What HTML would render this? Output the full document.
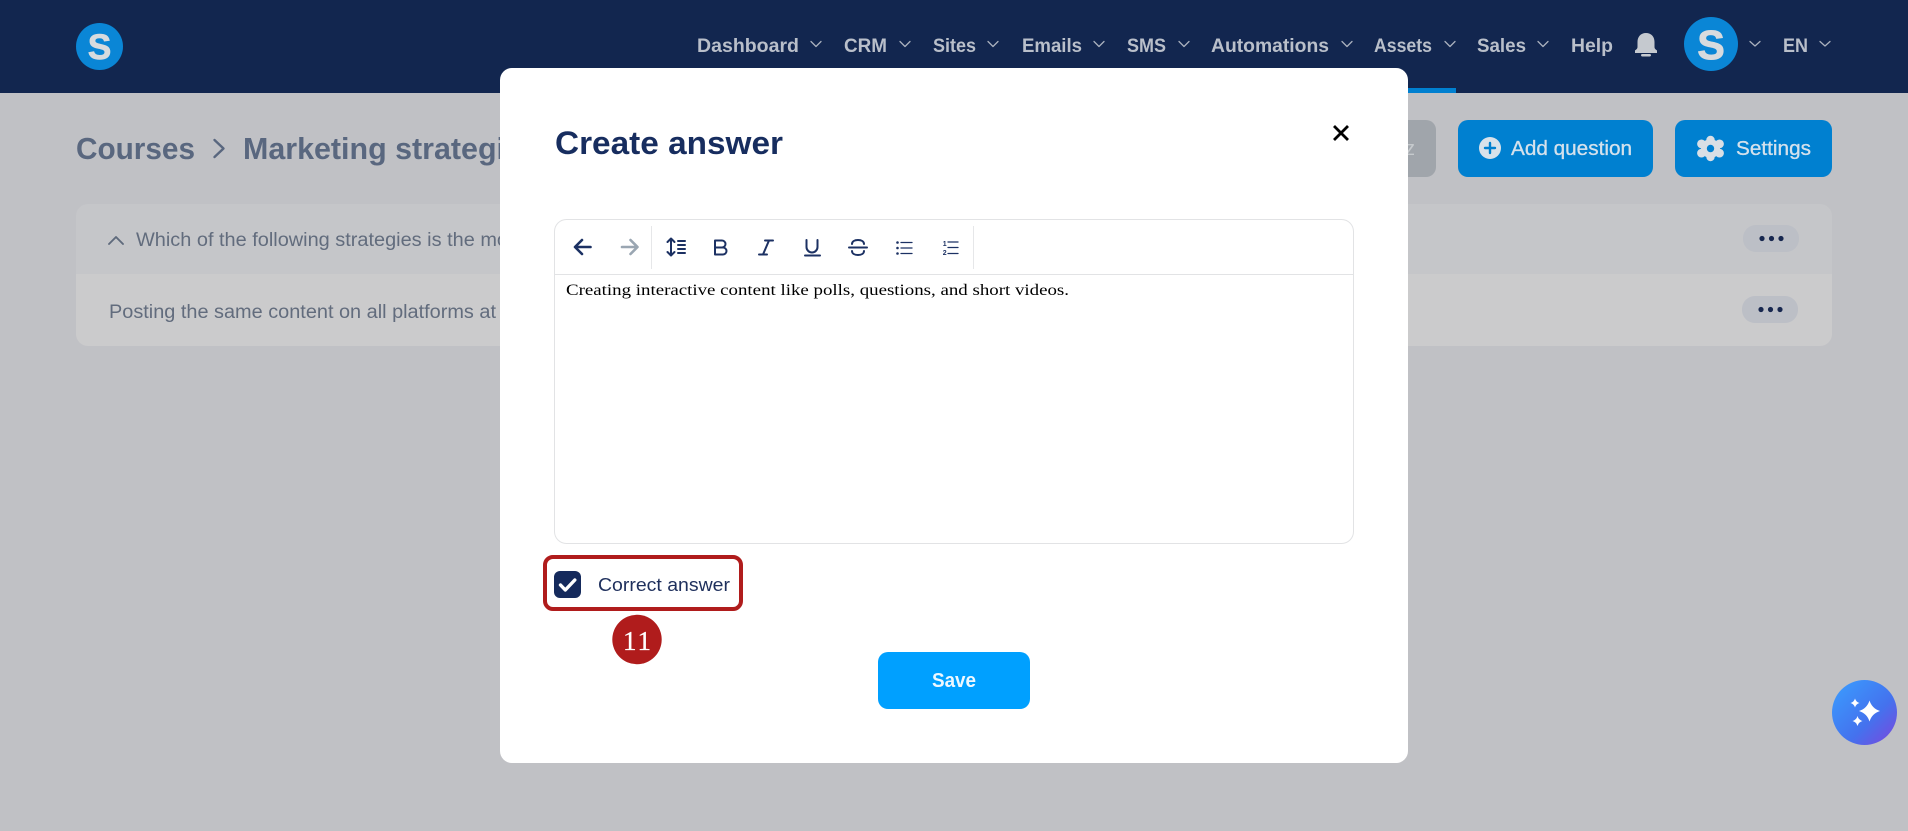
<!DOCTYPE html>
<html lang="en">
<head>
<meta charset="utf-8">
<title>Create answer</title>
<style>
html,body{margin:0;padding:0;background:#c0c1c5;width:1908px;height:831px;overflow:hidden}
svg{display:block}
text{font-family:"Liberation Sans",sans-serif}
.nav{font-weight:700;font-size:19px;fill:#b9bfca}
.chev{fill:none;stroke:#aab1be;stroke-width:1.3;stroke-linecap:round;stroke-linejoin:round}
.tb{fill:none;stroke:#1c3163;stroke-width:2;stroke-linecap:round;stroke-linejoin:round}
.thin{stroke-width:1.3}
.fat{stroke-width:2.6}
.row{font-size:19px;fill:#626c7d}
</style>
</head>
<body>
<svg width="1908" height="831" viewBox="0 0 1908 831" xmlns="http://www.w3.org/2000/svg">
<defs>
<linearGradient id="fab" x1="0" y1="0" x2="1" y2="1"><stop offset="0" stop-color="#3a9fff"/><stop offset=".6" stop-color="#4472ee"/><stop offset="1" stop-color="#7d45dc"/></linearGradient>
</defs>
<rect width="1908" height="831" fill="#c0c1c5"/>
<!-- header -->
<rect width="1908" height="93" fill="#12264f"/>
<rect x="1370" y="88" width="86" height="5" fill="#0080d0"/>
<circle cx="99.5" cy="46.5" r="23.5" fill="#0a86d6"/>
<text x="99.5" y="59" text-anchor="middle" font-size="35" font-weight="700" fill="#d8dbde" stroke="#d8dbde" stroke-width=".9">S</text>
<text class="nav" x="697" y="52" textLength="102" lengthAdjust="spacingAndGlyphs">Dashboard</text>
<path class="chev" d="M811 41.500l5 5 5-5"/>
<text class="nav" x="844" y="52" textLength="43" lengthAdjust="spacingAndGlyphs">CRM</text>
<path class="chev" d="M900 41.500l5 5 5-5"/>
<text class="nav" x="933" y="52" textLength="43" lengthAdjust="spacingAndGlyphs">Sites</text>
<path class="chev" d="M988 41.500l5 5 5-5"/>
<text class="nav" x="1022" y="52" textLength="60" lengthAdjust="spacingAndGlyphs">Emails</text>
<path class="chev" d="M1094 41.500l5 5 5-5"/>
<text class="nav" x="1127" y="52" textLength="39" lengthAdjust="spacingAndGlyphs">SMS</text>
<path class="chev" d="M1179 41.500l5 5 5-5"/>
<text class="nav" x="1211" y="52" textLength="118" lengthAdjust="spacingAndGlyphs">Automations</text>
<path class="chev" d="M1342 41.500l5 5 5-5"/>
<text class="nav" x="1374" y="52" textLength="58" lengthAdjust="spacingAndGlyphs">Assets</text>
<path class="chev" d="M1445 41.500l5 5 5-5"/>
<text class="nav" x="1477" y="52" textLength="49" lengthAdjust="spacingAndGlyphs">Sales</text>
<path class="chev" d="M1538 41.500l5 5 5-5"/>
<text class="nav" x="1571" y="52" textLength="42" lengthAdjust="spacingAndGlyphs">Help</text>
<path d="M1646 33c-5.500 0-8.500 4-8.500 9v5c0 2-1.500 2.500-2.500 3.500v2.500h22v-2.500c-1-1-2.500-1.500-2.500-3.500v-5c0-5-3-9-8.500-9z" fill="#c5c9cf"/>
<rect x="1641" y="54" width="10" height="2.500" rx="1.200" fill="#c5c9cf"/>
<circle cx="1711" cy="44" r="27" fill="#0a86d6"/>
<text x="1711" y="59" text-anchor="middle" font-size="41" font-weight="700" fill="#d8dbde" stroke="#d8dbde" stroke-width="1">S</text>
<path class="chev" d="M1750 41.500l5 4.500 5-4.500"/>
<text class="nav" x="1783" y="52" textLength="25" lengthAdjust="spacingAndGlyphs">EN</text>
<path class="chev" d="M1820 41.500l5 4.500 5-4.500"/>
<!-- breadcrumb -->
<text x="76" y="159" font-size="31" font-weight="700" fill="#59677f" textLength="119" lengthAdjust="spacingAndGlyphs">Courses</text>
<path d="M214.500 140l9 8.500-9 8.500" fill="none" stroke="#59677f" stroke-width="2.400" stroke-linecap="round" stroke-linejoin="round"/>
<text x="243" y="159" font-size="31" font-weight="700" fill="#59677f" textLength="262" lengthAdjust="spacingAndGlyphs">Marketing strategi</text>
<!-- buttons -->
<rect x="1300" y="120" width="136" height="57" rx="10" fill="#a0a5ab"/>
<text x="1415" y="155" text-anchor="end" font-size="20" fill="#c6cacd">quiz</text>
<rect x="1458" y="120" width="195" height="57" rx="10" fill="#0080d0"/>
<circle cx="1490" cy="148" r="11" fill="#d9e2ea"/>
<path d="M1490 143v10M1485 148h10" stroke="#0080d0" stroke-width="2.400" stroke-linecap="round"/>
<text x="1511" y="155" font-size="20" fill="#d4e1ec" stroke="#d4e1ec" stroke-width=".3" textLength="121" lengthAdjust="spacingAndGlyphs">Add question</text>
<rect x="1675" y="120" width="157" height="57" rx="10" fill="#0080d0"/>
<g fill="#d9dfe5">
<circle cx="1710.500" cy="148.500" r="9.500"/>
<circle cx="1710.500" cy="140" r="4.200"/><circle cx="1710.500" cy="157" r="4.200"/>
<circle cx="1701.500" cy="143.900" r="4.400"/><circle cx="1719.500" cy="143.900" r="4.400"/>
<circle cx="1701.500" cy="153.100" r="4.400"/><circle cx="1719.500" cy="153.100" r="4.400"/>
</g>
<circle cx="1710.500" cy="148.500" r="3.700" fill="#0080d0"/>
<text x="1736" y="155" font-size="20" fill="#d4e1ec" stroke="#d4e1ec" stroke-width=".3" textLength="75" lengthAdjust="spacingAndGlyphs">Settings</text>
<!-- card -->
<path d="M88 204H1820a12 12 0 0 1 12 12V274H76V216a12 12 0 0 1 12-12z" fill="#c5c6c9"/>
<path d="M76 274H1832V334a12 12 0 0 1-12 12H88a12 12 0 0 1-12-12z" fill="#cbcbcc"/>
<path d="M109 244l7-7 7 7" fill="none" stroke="#5f6a7c" stroke-width="1.900" stroke-linecap="round" stroke-linejoin="round"/>
<text class="row" x="136" y="246" textLength="372" lengthAdjust="spacingAndGlyphs">Which of the following strategies is the mo</text>
<text class="row" x="109" y="318" textLength="387" lengthAdjust="spacingAndGlyphs">Posting the same content on all platforms at</text>
<rect x="1743" y="225" width="56" height="27" rx="13" fill="#bcbfc6"/>
<circle cx="1762" cy="238.500" r="2.600" fill="#17274f"/><circle cx="1771.500" cy="238.500" r="2.600" fill="#17274f"/><circle cx="1781" cy="238.500" r="2.600" fill="#17274f"/>
<rect x="1742" y="296" width="56" height="27" rx="13" fill="#bcbfc6"/>
<circle cx="1761" cy="309.500" r="2.600" fill="#17274f"/><circle cx="1770.500" cy="309.500" r="2.600" fill="#17274f"/><circle cx="1780" cy="309.500" r="2.600" fill="#17274f"/>
<!-- modal -->
<rect x="500" y="68" width="908" height="695" rx="12" fill="#fff"/>
<text x="555" y="154" font-size="32" font-weight="700" fill="#172d5f" textLength="228" lengthAdjust="spacingAndGlyphs">Create answer</text>
<path d="M1335 127l12 12M1347 127l-12 12" stroke="#000" stroke-width="2.800" stroke-linecap="square"/>
<!-- editor -->
<rect x="554.500" y="219.500" width="799" height="324" rx="12" fill="#fff" stroke="#e2e3e5"/>
<path d="M555 274.500H1353" stroke="#e2e3e5"/>
<path d="M651.500 226V269M973.500 226V269" stroke="#e6e7e9"/>
<path class="tb fat" d="M590.500 247H575.500M582 240l-7 7 7 7"/>
<path class="tb fat" d="M622 247H637M630.500 240l7 7-7 7" style="stroke:#9aa6b2"/>
<path class="tb" d="M671 239V255M667.500 242l3.500-3.500 3.500 3.500M667.500 252l3.500 3.500 3.500-3.500M678 241h7M678 245h7M678 249h7M678 253h7"/>
<path class="tb" d="M715 240.500h7a3.500 3.500 0 0 1 0 7h-7zM715 247.500h8a3.500 3.500 0 0 1 0 7h-8z"/>
<path class="tb" d="M765 240.500h8M759 254.500h8M769 240.500l-6 14"/>
<path class="tb" d="M806.500 240v7a5.500 5.500 0 0 0 11 0v-7M805 255.500h15"/>
<path class="tb" d="M864 244c0-2.500-2.500-4-6-4s-6 1.500-6 4M852 251c0 2.500 2.500 4 6 4s6-1.500 6-4M849 247.500h18"/>
<path class="tb thin" d="M901 242.500h11M901 248h11M901 253.500h11"/>
<circle cx="897.500" cy="242.500" r="1.300" fill="#1c3163"/><circle cx="897.500" cy="248" r="1.300" fill="#1c3163"/><circle cx="897.500" cy="253.500" r="1.300" fill="#1c3163"/>
<path class="tb thin" d="M948 242h10M948 247.500h10M948 253.500h10"/>
<text x="942.800" y="246" font-size="7" font-weight="700" fill="#1c3163">1</text>
<text x="942.800" y="255" font-size="7" font-weight="700" fill="#1c3163">2</text>
<text x="566" y="295" style="font-family:'Liberation Serif',serif" font-size="16" fill="#000" textLength="503" lengthAdjust="spacingAndGlyphs">Creating interactive content like polls, questions, and short videos.</text>
<!-- checkbox -->
<rect x="545" y="557" width="196" height="52" rx="8" fill="#fff" stroke="#b01c1c" stroke-width="4"/>
<rect x="554" y="571" width="27" height="27" rx="6" fill="#152a5c"/>
<path d="M560.500 585l4.800 5 9.500-10" fill="none" stroke="#fff" stroke-width="3.400" stroke-linecap="round" stroke-linejoin="round"/>
<text x="598" y="591" font-size="18" fill="#1e2f5c" textLength="132" lengthAdjust="spacingAndGlyphs">Correct answer</text>
<circle cx="637" cy="639.500" r="24.700" fill="#b01c1c"/>
<text x="623" y="650" style="font-family:'Liberation Serif',serif" font-size="27" fill="#fff" stroke="#fff" stroke-width=".3" textLength="28" lengthAdjust="spacing">11</text>
<!-- save -->
<rect x="878" y="652" width="152" height="57" rx="10" fill="#00a0ff"/>
<text x="932" y="687" font-size="20" font-weight="700" fill="#eef8ff" textLength="44" lengthAdjust="spacingAndGlyphs">Save</text>
<!-- fab -->
<circle cx="1864.500" cy="712.500" r="32.500" fill="url(#fab)"/>
<path fill="#fff" d="M1869.500 700.500Q1872 708.500 1880 711Q1872 713.500 1869.500 721.500Q1867 713.500 1859 711Q1867 708.500 1869.500 700.500zM1855 698.500Q1856 702 1859.500 703Q1856 704 1855 707.500Q1854 704 1850.500 703Q1854 702 1855 698.500zM1857.500 716Q1858.600 719.900 1862.500 721Q1858.600 722.100 1857.500 726Q1856.400 722.100 1852.500 721Q1856.400 719.900 1857.500 716z"/>
</svg>
</body>
</html>
